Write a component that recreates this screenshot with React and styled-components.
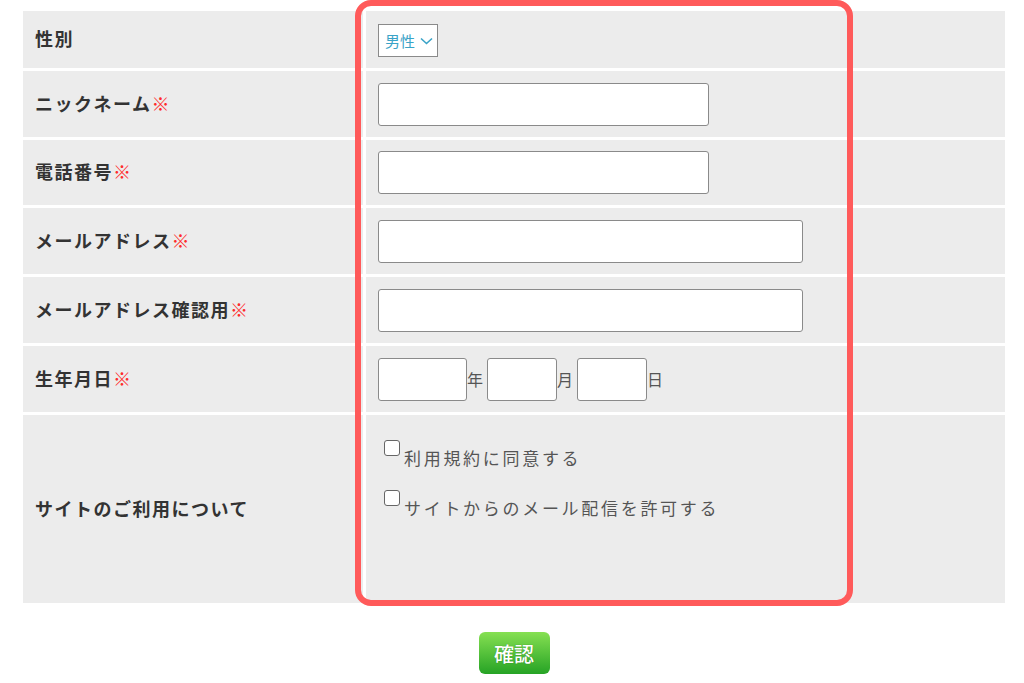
import React from "react";
import styled, { createGlobalStyle } from "styled-components";

const GlobalStyle = createGlobalStyle`
  body {
    margin: 0;
    background: #ffffff;
    font-family: "Noto Sans CJK JP", "Noto Sans", sans-serif;
  }
`;

const rows = [
  { label: "性別", required: false, kind: "select", height: 57 },
  { label: "ニックネーム", required: true, kind: "text", width: 331, height: 66 },
  { label: "電話番号", required: true, kind: "text", width: 331, height: 65 },
  { label: "メールアドレス", required: true, kind: "text", width: 425, height: 66 },
  { label: "メールアドレス確認用", required: true, kind: "text", width: 425, height: 66 },
  { label: "生年月日", required: true, kind: "date", height: 66 },
  { label: "サイトのご利用について", required: false, kind: "check", height: 188 },
];

const App = () => {
  return (
    <StyledPage>
      <GlobalStyle />
      <FormWrap>
        <Table>
          {rows.map((row) => (
            <Row key={row.label} $height={row.height}>
              <LabelCell>
                {row.label}
                {row.required && <Required>※</Required>}
              </LabelCell>
              <FieldCell $top={row.kind === "check"}>
                {row.kind === "select" && (
                  <Select>
                    男性
                    <svg width="13" height="8" viewBox="0 0 13 8">
                      <path d="M1 1.5l5.5 5 5.5-5" fill="none" stroke="#3aa3c7" strokeWidth="1.6" />
                    </svg>
                  </Select>
                )}
                {row.kind === "text" && <TextInput $width={row.width} />}
                {row.kind === "date" && (
                  <DateGroup>
                    <TextInput $width={89} />
                    <DateUnit>年</DateUnit>
                    <TextInput $width={70} />
                    <DateUnit>月</DateUnit>
                    <TextInput $width={70} />
                    <DateUnit>日</DateUnit>
                  </DateGroup>
                )}
                {row.kind === "check" && (
                  <CheckList>
                    <CheckLine>
                      <Box />
                      <CheckText>利用規約に同意する</CheckText>
                    </CheckLine>
                    <CheckLine>
                      <Box />
                      <CheckText>サイトからのメール配信を許可する</CheckText>
                    </CheckLine>
                  </CheckList>
                )}
              </FieldCell>
            </Row>
          ))}
        </Table>
        <Highlight />
      </FormWrap>
      <ButtonBar>
        <ConfirmButton>確認</ConfirmButton>
      </ButtonBar>
    </StyledPage>
  );
};

export default App;

const StyledPage = styled.div`
  width: 1024px;
  height: 683px;
  padding: 11px 19px 0 23px;
  box-sizing: border-box;
  overflow: hidden;
`;

const FormWrap = styled.div`
  position: relative;
`;

const Table = styled.div`
  display: flex;
  flex-direction: column;
  gap: 3px;
`;

const Row = styled.div`
  display: grid;
  grid-template-columns: 340px 1fr;
  column-gap: 3px;
  height: ${(p) => p.$height}px;
`;

const LabelCell = styled.div`
  background: #ececec;
  display: flex;
  align-items: center;
  padding: 0 0 3px 12px;
  font-size: 18px;
  font-weight: 700;
  letter-spacing: 1.5px;
  color: #333333;
`;

const Required = styled.span`
  color: #ff2a2a;
  font-weight: 400;
`;

const FieldCell = styled.div`
  background: #ececec;
  display: flex;
  align-items: ${(p) => (p.$top ? "flex-start" : "center")};
  padding-left: 12px;
`;

const Select = styled.div`
  display: flex;
  align-items: center;
  gap: 5px;
  width: 60px;
  height: 33px;
  box-sizing: border-box;
  margin-top: 2px;
  padding-left: 6px;
  background: #ffffff;
  border: 1px solid #8a8a8a;
  font-size: 15px;
  color: #3aa3c7;
`;

const TextInput = styled.input`
  width: ${(p) => p.$width}px;
  height: 43px;
  box-sizing: border-box;
  margin: 0;
  background: #ffffff;
  border: 1px solid #8a8a8a;
  border-radius: 3px;
`;

const DateGroup = styled.div`
  display: flex;
  align-items: center;
`;

const DateUnit = styled.span`
  font-size: 16px;
  color: #555555;
  margin: 0 1px 0 0;
  width: 19px;
`;

const CheckList = styled.div`
  display: flex;
  flex-direction: column;
  gap: 23px;
  padding: 25px 0 0 6px;
`;

const CheckLine = styled.label`
  display: flex;
  align-items: flex-start;
  gap: 4px;
`;

const Box = styled.span`
  width: 16px;
  height: 16px;
  box-sizing: border-box;
  border: 1px solid #666666;
  border-radius: 3px;
  background: #ffffff;
`;

const CheckText = styled.span`
  margin-top: 9px;
  font-size: 17px;
  line-height: 18px;
  letter-spacing: 2.7px;
  color: #555555;
`;

const Highlight = styled.div`
  position: absolute;
  left: 332px;
  top: -11px;
  width: 498px;
  height: 606px;
  box-sizing: border-box;
  border: 6px solid #ff5a5a;
  border-radius: 16px;
  pointer-events: none;
`;

const ButtonBar = styled.div`
  display: flex;
  justify-content: center;
  padding-top: 29px;
`;

const ConfirmButton = styled.button`
  width: 71px;
  height: 42px;
  border: none;
  border-radius: 6px;
  background: linear-gradient(#86e052, #26a325);
  color: #ffffff;
  font-family: "Noto Sans CJK JP", sans-serif;
  font-size: 20px;
  font-weight: 500;
  text-shadow: 0 0 1px rgba(0, 80, 0, 0.6);
  padding: 0;
`;
